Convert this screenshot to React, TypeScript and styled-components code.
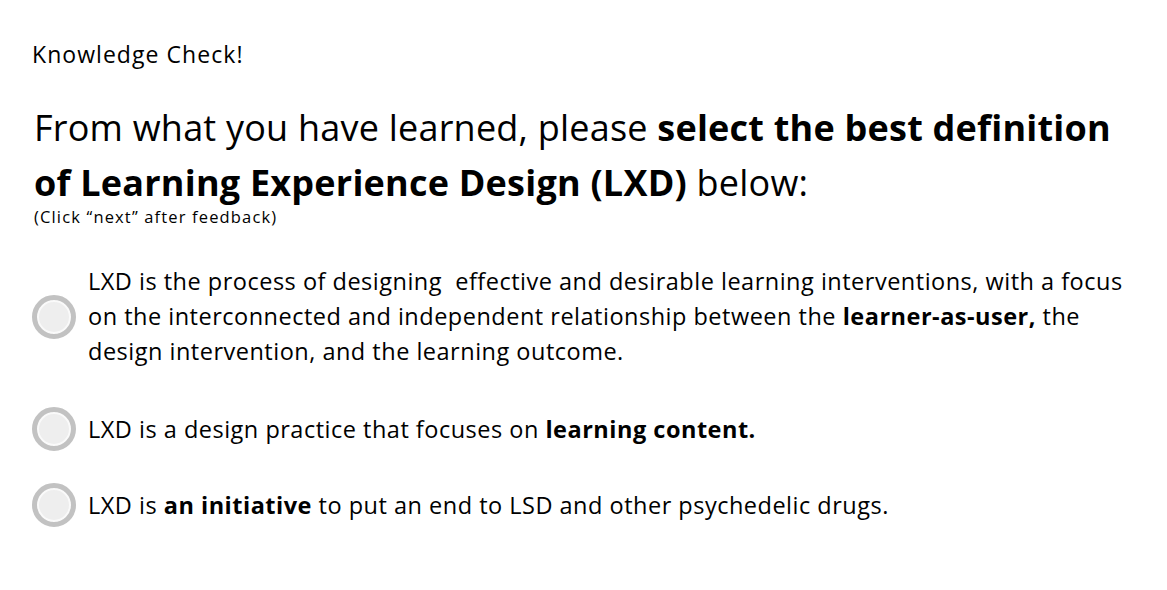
import React from "react";
import styled, { createGlobalStyle } from "styled-components";

const GlobalStyle = createGlobalStyle`
  html, body {
    margin: 0;
    padding: 0;
    background: #ffffff;
  }
  body {
    font-family: "Open Sans", Lato, sans-serif;
    color: #000000;
  }
`;

const Page = styled.main`
  display: flex;
  flex-direction: column;
  padding: 40px 0 0 32px;
  width: 1167px;
  height: 590px;
  box-sizing: border-box;
`;

const Kicker = styled.div`
  font-size: 23px;
  line-height: 28px;
  letter-spacing: 1.05px;
`;

const Question = styled.h1`
  margin: 32px 0 0 2px;
  font-size: 36px;
  font-weight: 400;
  line-height: 55px;
  letter-spacing: 0.22px;

  strong {
    font-weight: 700;
  }
`;

const Hint = styled.div`
  margin: -3px 0 0 2px;
  font-size: 16.5px;
  line-height: 20px;
  letter-spacing: 1.15px;
`;

const Options = styled.div`
  display: flex;
  flex-direction: column;
  margin-top: 37px;
`;

const OptionRow = styled.label<{ $space?: number }>`
  display: flex;
  align-items: center;
  gap: 12px;
  margin-top: ${(p) => p.$space ?? 0}px;
  cursor: pointer;
`;

const Radio = styled.span`
  flex: none;
  width: 44px;
  height: 44px;
  box-sizing: border-box;
  border-radius: 50%;
  border: 5px solid #c2c2c2;
  background: #eeeeee;
  box-shadow: inset 0 0 0 2px #fafafa;
`;

const OptionText = styled.span`
  font-size: 23.5px;
  line-height: 35px;
  letter-spacing: 0.5px;
  white-space: nowrap;

  strong {
    font-weight: 700;
  }
`;

export default function App() {
  return (
    <>
      <GlobalStyle />
      <Page>
        <Kicker>Knowledge Check!</Kicker>
        <Question>
          From what you have learned, please{" "}
          <strong>select the best definition</strong>
          <br />
          <strong>of Learning Experience Design (LXD)</strong> below:
        </Question>
        <Hint>(Click “next” after feedback)</Hint>
        <Options>
          <OptionRow>
            <Radio />
            <OptionText>
              LXD is the process of designing&nbsp; effective and desirable
              learning interventions, with a focus
              <br />
              on the interconnected and independent relationship between the{" "}
              <strong>learner-as-user,</strong> the
              <br />
              design intervention, and the learning outcome.
            </OptionText>
          </OptionRow>
          <OptionRow $space={38}>
            <Radio />
            <OptionText>
              LXD is a design practice that focuses on{" "}
              <strong>learning content.</strong>
            </OptionText>
          </OptionRow>
          <OptionRow $space={32}>
            <Radio />
            <OptionText>
              LXD is <strong>an initiative</strong> to put an end to LSD and
              other psychedelic drugs.
            </OptionText>
          </OptionRow>
        </Options>
      </Page>
    </>
  );
}
